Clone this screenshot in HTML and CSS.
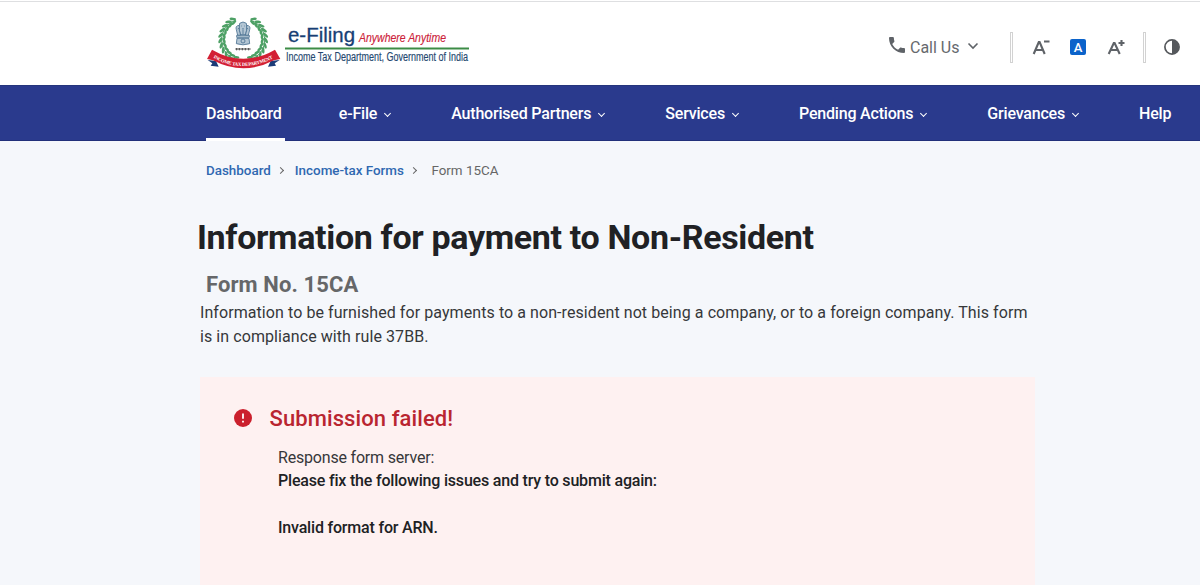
FILE: index.html
```html
<!DOCTYPE html>
<html lang="en">
<head>
    <meta charset="UTF-8">
    <meta name="viewport" content="width=device-width, initial-scale=1.0">
    <title>Form 15CA - e-Filing</title>
    <link rel="stylesheet" href="styles.css">
</head>
<body>

<header class="top-header">
    <div class="brand">
        <svg class="emblem" viewBox="18 25 225 165">
            <defs>
                <g id="leaf">
                    <ellipse cx="120" cy="24" rx="10" ry="4" transform="rotate(24 120 24)"/>
                    <ellipse cx="120" cy="35" rx="9" ry="4" transform="rotate(-28 120 35)"/>
                </g>
                <!-- left half of the wreath, mirrored for the right one -->
                <g id="branch" fill="#4da065">
                    <path d="M106 35C52 55 52 130 102 150" fill="none" stroke="#4da065" stroke-width="3"/>
                    <use href="#leaf" transform="rotate(-19 130 92)"/>
                    <use href="#leaf" transform="rotate(-32 130 92)"/>
                    <use href="#leaf" transform="rotate(-45 130 92)"/>
                    <use href="#leaf" transform="rotate(-58 130 92)"/>
                    <use href="#leaf" transform="rotate(-71 130 92)"/>
                    <use href="#leaf" transform="rotate(-84 130 92)"/>
                    <use href="#leaf" transform="rotate(-97 130 92)"/>
                    <use href="#leaf" transform="rotate(-110 130 92)"/>
                    <use href="#leaf" transform="rotate(-123 130 92)"/>
                    <use href="#leaf" transform="rotate(-136 130 92)"/>
                    <use href="#leaf" transform="rotate(-149 130 92)"/>
                </g>
                <path id="ribbon-line" d="M36 145Q130 201 232 142"/>
            </defs>
            <use href="#branch"/>
            <use href="#branch" transform="translate(259 0) scale(-1 1)"/>
            <!-- lion capital -->
            <g fill="#b4c6d4" stroke="#4a7191" stroke-width="2.5">
                <path d="M119 44Q129 36 139 44L141 58L137 78H121L117 58Z"/>
                <path d="M118 50Q105 51 109 63L113 80H122L118 65Z"/>
                <path d="M140 50Q153 51 149 63L145 80H136L140 65Z"/>
                <path d="M110 80H148V86H110Z"/>
                <path d="M111 89H147L149 105Q129 112 109 105Z"/>
                <circle cx="129" cy="97" r="6"/>
                <path d="M124 52H126M132 52H134M126 60Q129 63 132 60M129 64V76M113 61L117 59M145 61L141 59" fill="none"/>
            </g>
            <path d="M106 121H152M110 118V125M118 118V125M127 118V125M136 118V125M146 118V125" stroke="#4a4a4a" stroke-width="3"/>
            <path d="M23 154L48 157L56 174L32 171L37 164ZM239 154L212 157L204 174L228 171L224 164Z" fill="#1c3c78"/>
            <path d="M36 123Q130 178 225 123L241 151L222 155Q130 203 39 155L21 151Z" fill="#d32034"/>
            <text class="ribbon-text" fill="#fff"><textPath href="#ribbon-line" startOffset="4">INCOME TAX DEPARTMENT</textPath></text>
        </svg>
        <svg class="wordmark" viewBox="0 0 186 48">
            <text class="wordmark-title" x="3" y="22" textLength="67" lengthAdjust="spacingAndGlyphs">e-Filing</text>
            <text class="wordmark-tag" x="74" y="22" textLength="87" lengthAdjust="spacingAndGlyphs">Anywhere Anytime</text>
            <path d="M0 28.5H184" stroke="#3c8c46" stroke-width="2"/>
            <text class="wordmark-dept" x="1" y="41" textLength="182" lengthAdjust="spacingAndGlyphs">Income Tax Department, Government of India</text>
        </svg>
    </div>
    <div class="tools">
        <svg class="phone" viewBox="3 3 18 18"><path fill="#5f6368" d="M6.62 10.79c1.44 2.83 3.76 5.14 6.59 6.59l2.2-2.2c.27-.27.67-.36 1.02-.24 1.12.37 2.33.57 3.57.57.55 0 1 .45 1 1V20c0 .55-.45 1-1 1-9.39 0-17-7.61-17-17 0-.55.45-1 1-1h3.5c.55 0 1 .45 1 1 0 1.25.2 2.45.57 3.57.11.35.03.74-.25 1.02l-2.2 2.2z"/></svg>
        <span class="call">Call Us</span>
        <svg class="call-arrow" viewBox="0 0 12 8"><path d="M1.5 1.5L6 6L10.5 1.5" fill="none" stroke="#5f6368" stroke-width="1.6"/></svg>
        <span class="divider"></span>
        <svg class="font-btn" viewBox="0 0 17 17"><path d="M.7 15L5.800 3H6.600L11.700 15M2.500 11H9.900M11 2.5H16.500" fill="none" stroke="#5f6368" stroke-width="2.1"/></svg>
        <span class="font-active">A</span>
        <svg class="font-btn" viewBox="0 0 17 17"><path d="M.7 15L5.800 4H6.600L11.700 15M2.500 11H9.900M10.500 4H16.5M13.500 1V7" fill="none" stroke="#5f6368" stroke-width="2.1"/></svg>
        <span class="divider second"></span>
        <svg class="contrast" viewBox="0 0 16 16"><circle cx="8" cy="8" r="7.1" fill="#fff" stroke="#55585c" stroke-width="1.7"/><path d="M8 1A7 7 0 0 1 8 15Z" fill="#55585c"/></svg>
    </div>
</header>

<nav class="main-nav">
    <a class="nav-item active">Dashboard</a>
    <a class="nav-item">e-File <i class="arrow"></i></a>
    <a class="nav-item">Authorised Partners <i class="arrow"></i></a>
    <a class="nav-item">Services <i class="arrow"></i></a>
    <a class="nav-item">Pending Actions <i class="arrow"></i></a>
    <a class="nav-item">Grievances <i class="arrow"></i></a>
    <a class="nav-item">Help</a>
</nav>

<main class="content">
    <div class="breadcrumb">
        <a>Dashboard</a>
        <i class="crumb-arrow"></i>
        <a>Income-tax Forms</a>
        <i class="crumb-arrow"></i>
        <span class="current">Form 15CA</span>
    </div>

    <h1>Information for payment to Non-Resident</h1>
    <h2>Form No. 15CA</h2>
    <p class="description">Information to be furnished for payments to a non-resident not being a company, or to a foreign company. This form<br>is in compliance with rule 37BB.</p>

    <section class="error-box">
        <div class="error-title">
            <svg class="error-icon" viewBox="0 0 18 18"><circle cx="9" cy="9" r="9" fill="#cb202d"/><path d="M9 4.5V9.8M9 11.7V13.5" stroke="#fff" stroke-width="1.8"/></svg>
            <h3>Submission failed!</h3>
        </div>
        <div class="error-text">
            <p class="response">Response form server:</p>
            <p class="fix">Please fix the following issues and try to submit again:</p>
            <p class="issue">Invalid format for ARN.</p>
        </div>
    </section>
</main>

</body>
</html>
```
FILE: styles.css
```css
* {
    box-sizing: border-box;
}

body {
    margin: 0;
    height: 100vh;
    background-color: #f5f7fb;
    font-family: Roboto, sans-serif;
    font-size: 16px;
    color: #36373a;
    display: flex;
    flex-direction: column;
}

h1, h2, h3, p {
    margin: 0;
    white-space: nowrap;
}

svg {
    display: block;
    flex: none;
    overflow: visible;
}

.top-header {
    height: 85px;
    flex: none;
    border-top: 1px solid #fff;
    background-color: #fff;
    display: flex;
    box-shadow: inset 0 1px #dedfe1;
}

.brand {
    display: flex;
    padding: 15px 0 0 206px;
}

.emblem {
    width: 75px;
    height: 55px;
    margin-top: 1px;
}

.ribbon-text {
    font: bold 14.5px "Liberation Serif", serif;
    letter-spacing: -0.6px;
}

.wordmark {
    width: 186px;
    height: 48px;
    margin: 4px 0 0 4px;
    font-family: "Liberation Sans", sans-serif;
}

.wordmark-title {
    font-size: 21px;
    fill: #173e74;
    stroke: #173e74;
    stroke-width: 0.3px;
}

.wordmark-tag {
    font-size: 13.5px;
    font-style: italic;
    fill: #cc2038;
    stroke: #cc2038;
    stroke-width: 0.15px;
}

.wordmark-dept {
    font-size: 12px;
    fill: #24476f;
    stroke: #24476f;
    stroke-width: 0.15px;
}

.tools {
    display: flex;
    align-items: center;
    height: 93px;
    padding-right: 20px;
    margin-left: auto;
    color: #66696d;
}

.phone {
    width: 16px;
    height: 16px;
    margin: 0 5px 6px 0;
}

.call {
    width: 49px;
    padding-bottom: 1px;
    white-space: nowrap;
}

.call-arrow {
    width: 12px;
    height: 8px;
    margin: 0 31px 4px 8px;
}

.divider {
    width: 3px;
    height: 31px;
    border: 1px solid #d2d2d2;
    margin-right: 20px;
}

.font-btn {
    width: 17px;
    height: 17px;
    margin-bottom: 1px;
}

.font-active {
    width: 16px;
    height: 16px;
    margin: 0 22px 2px 20px;
    border-radius: 2px;
    background-color: #0b63ca;
    color: #fff;
    font-size: 13px;
    line-height: 17px;
    font-weight: 500;
    text-align: center;
}

.divider.second {
    margin: 0 18px;
}

.contrast {
    width: 16px;
    height: 16px;
    margin-bottom: 2px;
}

.main-nav {
    height: 56px;
    flex: none;
    padding-left: 206px;
    background-color: #2a3a8d;
    border-top: 1px solid #25357c;
    border-bottom: 1px solid #22307a;
    display: flex;
    gap: 60.1px;
}

.nav-item {
    display: flex;
    align-items: center;
    height: 55px;
    color: #fff;
    font-weight: 500;
    letter-spacing: -0.2px;
    white-space: nowrap;
}

.nav-item.active {
    width: 79px;
    margin-right: -6.3px;
    padding-top: 3px;
    border-bottom: 3px solid #fff;
    z-index: 1;
}

.arrow {
    width: 5px;
    height: 5px;
    margin: 0 1px 1px 8px;
    border-right: 1.5px solid #fff;
    border-bottom: 1.5px solid #fff;
    transform: rotate(45deg);
}

.content {
    flex: 1;
    min-height: 0;
    padding-left: 200px;
    display: flex;
    flex-direction: column;
}

.breadcrumb {
    display: flex;
    align-items: center;
    height: 20px;
    margin: 19px 0 0 6px;
    font-size: 13.4px;
    font-weight: 500;
    color: #2f68b1;
}

.crumb-arrow {
    width: 5px;
    height: 5px;
    margin: 0 12px 0 7px;
    border-top: 1.5px solid #666;
    border-right: 1.5px solid #666;
    transform: rotate(45deg);
}

.current {
    color: #666;
    font-weight: 400;
    margin-left: 3.5px;
}

h1 {
    margin: 37px 0 0 -3px;
    font-size: 34px;
    line-height: 40px;
    font-weight: 700;
    letter-spacing: -0.34px;
    color: #202124;
}

h2 {
    margin: 13px 0 0 6px;
    font-size: 22px;
    line-height: 30px;
    font-weight: 700;
    letter-spacing: 0.1px;
    color: #666769;
}

.description {
    line-height: 24px;
    margin-top: 1px;
    letter-spacing: 0.075px;
}

.error-box {
    width: 835px;
    flex: 1;
    margin-top: 28px;
    padding: 26px 0 0 33.5px;
    background-color: #fef1f1;
}

.error-title {
    display: flex;
    align-items: center;
    gap: 18px;
    height: 30px;
}

.error-icon {
    width: 18px;
    height: 18px;
}

h3 {
    font-size: 22px;
    font-weight: 500;
    letter-spacing: 0.1px;
    color: #b92530;
}

.error-text {
    margin: 13px 0 0 44.5px;
    line-height: 24px;
    letter-spacing: -0.19px;
}

.fix,
.issue {
    font-weight: 500;
    color: #202124;
}

.fix {
    margin-top: -1px;
}

.issue {
    margin-top: 23px;
}
```
